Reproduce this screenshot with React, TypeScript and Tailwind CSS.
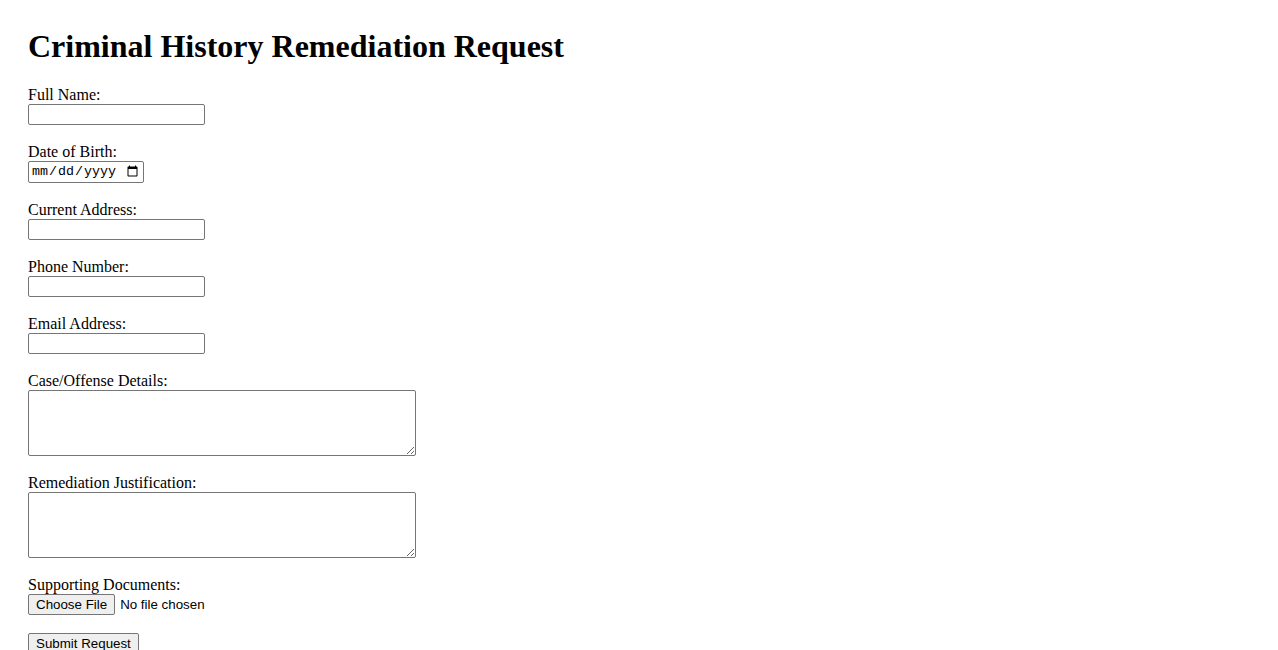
import React from 'react';

const inputCls =
  "block w-[177px] h-[21px] border border-[#767676] rounded-[2px] bg-white px-[2px] py-[1px] font-['Liberation_Sans',Arial,sans-serif] text-[13.33px] text-black";
const areaCls =
  "block w-[388px] h-[66px] border border-[#767676] rounded-[2px] bg-white px-[2px] py-[2px] font-['Liberation_Mono',monospace] text-[13.33px] text-black resize";
const btnCls =
  "block border border-[#767676] rounded-[2px] bg-[#efefef] px-[7px] h-[21px] font-['Liberation_Sans',Arial,sans-serif] text-[13.33px] leading-[15px] text-black";

function Field({ label, id, children }: { label: string; id: string; children: React.ReactNode }) {
  return (
    <div className="mb-[18px]">
      <label htmlFor={id} className="block leading-[18px]">
        {label}
      </label>
      {children}
    </div>
  );
}

export default function App() {
  return (
    <div className="min-h-screen bg-white pl-[28px] pt-[28px] font-['Liberation_Serif','Times_New_Roman',serif] text-[16px] text-black">
      <h1 className="text-[32px] font-bold leading-[37px] mb-[21px]">Criminal History Remediation Request</h1>

      <form onSubmit={(e) => e.preventDefault()}>
        <Field label="Full Name:" id="fullName">
          <input id="fullName" type="text" className={inputCls} />
        </Field>

        <Field label="Date of Birth:" id="dob">
          <input
            id="dob"
            type="date"
            className="block w-[116px] h-[22px] border border-[#767676] rounded-[2px] bg-white pl-[2px] pr-[2px] font-['Liberation_Mono',monospace] text-[13.33px] text-black"
          />
        </Field>

        <Field label="Current Address:" id="address">
          <input id="address" type="text" className={inputCls} />
        </Field>

        <Field label="Phone Number:" id="phone">
          <input id="phone" type="tel" className={inputCls} />
        </Field>

        <Field label="Email Address:" id="email">
          <input id="email" type="email" className={inputCls} />
        </Field>

        <Field label="Case/Offense Details:" id="caseDetails">
          <textarea id="caseDetails" className={areaCls} />
        </Field>

        <Field label="Remediation Justification:" id="justification">
          <textarea id="justification" className={areaCls} />
        </Field>

        <Field label="Supporting Documents:" id="docs">
          <input
            id="docs"
            type="file"
            className="block h-[21px] font-['Liberation_Sans',Arial,sans-serif] text-[13.33px] text-black file:mr-[5px] file:h-[21px] file:border file:border-[#767676] file:rounded-[2px] file:bg-[#efefef] file:px-[7px] file:text-[13.33px] file:text-black"
          />
        </Field>

        <button type="submit" className={btnCls}>
          Submit Request
        </button>
      </form>
    </div>
  );
}
